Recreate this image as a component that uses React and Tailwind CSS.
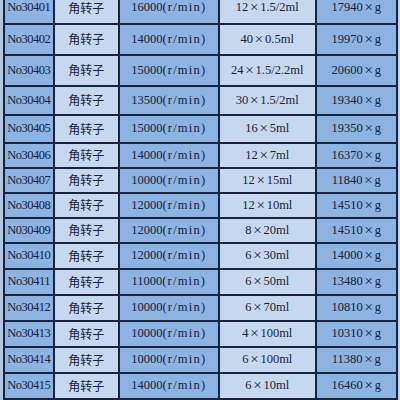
import React from "react";

const rows = [
  ["No30401", "16000", "12×1.5/2ml", "17940"],
  ["No30402", "14000", "40×0.5ml", "19970"],
  ["No30403", "15000", "24×1.5/2.2ml", "20600"],
  ["No30404", "13500", "30×1.5/2ml", "19340"],
  ["No30405", "15000", "16×5ml", "19350"],
  ["No30406", "14000", "12×7ml", "16370"],
  ["No30407", "10000", "12×15ml", "11840"],
  ["No30408", "12000", "12×10ml", "14510"],
  ["N030409", "12000", "8×20ml", "14510"],
  ["No30410", "12000", "6×30ml", "14000"],
  ["No30411", "11000", "6×50ml", "13480"],
  ["No30412", "10000", "6×70ml", "10810"],
  ["No30413", "10000", "4×100ml", "10310"],
  ["No30414", "10000", "6×100ml", "11380"],
  ["No30415", "14000", "6×10ml", "16460"],
];

const blue = "bg-[#8db3e2]";
const light = "bg-[#c6d8f0]";
const cell = "flex items-center justify-center whitespace-nowrap text-[#18223a]";

// wide multiply sign like the SimSun original
function Times({ text }) {
  const [a, b] = text.split("×");
  return (
    <>
      {a}
      <span className="inline-block w-[12px] text-center text-[15px] leading-none">×</span>
      {b}
    </>
  );
}

export default function App() {
  return (
    <div className="w-[400px] h-[400px] overflow-hidden flex bg-[#c3d5ee] font-['Liberation_Serif','Noto_Sans_CJK_SC',serif] text-[12.5px]">
      <div className="w-[3px] shrink-0 bg-[#b3c6e1]" />
      <div className="shrink-0 -mt-[8px] self-start bg-[#17233f] px-[1.5px] pb-[1.5px] grid grid-cols-[48.5px_63.5px_98.5px_95.5px_79.5px] grid-rows-[31px_29.5px_29.5px_27.5px_26.5px_23.5px_23.5px_23.5px_23.5px_24.5px_24.5px_24.5px_24.5px_24.5px_24.5px_24.5px] gap-[1.5px]">
        {rows.map((r) => (
          <React.Fragment key={r[0]}>
            <div className={`${cell} ${blue} tracking-[-0.5px]`}>{r[0]}</div>
            <div className={`${cell} ${light} font-['Noto_Sans_CJK_SC',sans-serif] text-[12px] text-[#262b38]`}>角转子</div>
            <div className={`${cell} ${blue}`}>
              {r[1]}
              <span className="tracking-[1.2px]">(r/min)</span>
            </div>
            <div className={`${cell} ${light}`}>
              <Times text={r[2]} />
            </div>
            <div className={`${cell} ${blue}`}>
              <Times text={r[3] + "×g"} />
            </div>
          </React.Fragment>
        ))}
        <div className={blue} />
        <div className={light} />
        <div className={blue} />
        <div className={light} />
        <div className={blue} />
      </div>
    </div>
  );
}
